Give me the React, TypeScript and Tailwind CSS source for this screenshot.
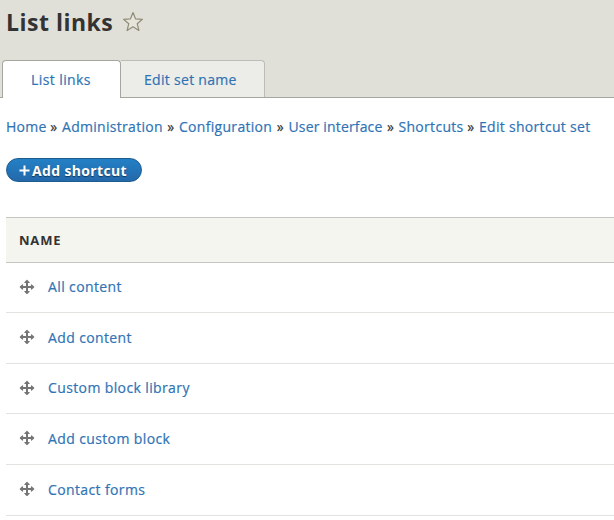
const crumbs = [
  { label: "Home", style: "w-[56px]" },
  { label: "Administration", style: "w-[117px]" },
  { label: "Configuration", style: "w-[109.5px]" },
  { label: "User interface", style: "w-[110px] tracking-[0.15px]" },
  { label: "Shortcuts", style: "w-[80.5px]" },
  { label: "Edit shortcut set", style: "" },
];

const rows = [
  { label: "All content", height: "h-[50px]" },
  { label: "Add content", height: "h-[51px]" },
  { label: "Custom block library", height: "h-[50px]" },
  { label: "Add custom block", height: "h-[51px]" },
  { label: "Contact forms", height: "h-[51px]" },
];

function MoveIcon() {
  return (
    <svg width="16" height="16" viewBox="0 0 16 16" fill="#757575" className="shrink-0">
      <path d="M15.1 7.6 12.8 5.4c-.4-.3-.9-.1-.9.4V7H9V4h1.2c.5 0 .7-.4.4-.8L8.4.9c-.2-.2-.6-.2-.8 0L5.4 3.2c-.3.4-.1.8.4.8H7v3H4.1V5.8c0-.5-.5-.7-.9-.4L.9 7.6c-.2.2-.2.6 0 .8l2.3 2.2c.4.3.9.1.9-.4V9H7v3H5.8c-.5 0-.7.4-.4.8l2.2 2.3c.2.2.6.2.8 0l2.2-2.3c.3-.4.1-.8-.4-.8H9V9h2.9v1.2c0 .5.5.7.9.4l2.3-2.2c.2-.2.2-.6 0-.8Z" />
    </svg>
  );
}

function StarIcon() {
  return (
    <svg width="22" height="22" viewBox="0 0 22 22" fill="#e6e5dc" stroke="#8f8c78" strokeWidth="1.2" strokeLinejoin="round">
      <path d="m11 1.5 2.5 6.3 6.9.5-5.2 4.4 1.7 6.8-5.9-3.7-5.9 3.7 1.7-6.8-5.2-4.4 6.9-.5Z" />
    </svg>
  );
}

export default function App() {
  return (
    <div className="h-[520px] w-[614px] overflow-hidden bg-white font-['Open_Sans','Noto_Sans',sans-serif] text-[14px] tracking-[0.3px] text-[#2f73b5] [-webkit-text-stroke:0.2px]">
      <header className="flex h-[98px] flex-col justify-between border-b border-[#a6a6a0] bg-[#e0e0d8]">
        <div className="flex h-[44px] items-center gap-[9px] pl-[6px]">
          <h1 className="w-[107px] whitespace-nowrap text-[23px] font-bold tracking-[0.5px] text-[#333] [-webkit-text-stroke:0px]">List links</h1>
          <StarIcon />
        </div>
        <nav className="-mb-px flex h-[38px] pl-[2px]">
          <a className="flex w-[119px] items-center justify-center rounded-t-[4px] border border-b-0 border-[#a6a6a0] bg-white pr-px tracking-[0.4px]">List links</a>
          <a className="mb-px flex w-[144px] items-center rounded-tr-[4px] border-t border-r border-[#bdbdb7] bg-[#ecede8] pl-[23px]">Edit set name</a>
        </nav>
      </header>

      <nav className="flex h-[58px] items-center whitespace-nowrap pb-[2px] pl-[6px]">
        {crumbs.map((crumb, i) => (
          <span key={crumb.label} className={`flex justify-between ${crumb.style}`}>
            <a>{crumb.label}</a>
            {i < crumbs.length - 1 && <span className="mr-[4.5px] text-[#333]">»</span>}
          </span>
        ))}
      </nav>

      <div className="h-[61px] pt-[2px] pl-[6px]">
        <button className="flex h-[24px] w-[136px] items-center rounded-full border border-[#1e5c90] bg-linear-to-b from-[#2380c5] to-[#2369ab] pl-[12px] text-[14px] font-bold tracking-[0.35px] text-white [-webkit-text-stroke:0px] [text-shadow:0_1px_1px_rgba(0,0,0,0.5)]">
          <svg width="11" height="11" viewBox="0 0 11 11" className="mr-[2px]" stroke="white" strokeWidth="2">
            <path d="M5.5 .5v10M.5 5.5h10" />
          </svg>
          <span className="whitespace-nowrap">Add shortcut</span>
        </button>
      </div>

      <section className="ml-[6px]">
        <div className="flex h-[46px] items-center border-y border-[#c6c6c1] bg-[#f5f5f0] pt-[2px] pl-[13px] text-[13px] font-bold tracking-[0.8px] text-[#333] [-webkit-text-stroke:0px]">NAME</div>
        {rows.map((row) => (
          <div key={row.label} className={`flex items-center gap-[13px] border-b border-[#e2e2de] pb-[2px] pl-[13px] ${row.height}`}>
            <MoveIcon />
            <a className="whitespace-nowrap tracking-[0.38px]">{row.label}</a>
          </div>
        ))}
      </section>
    </div>
  );
}
